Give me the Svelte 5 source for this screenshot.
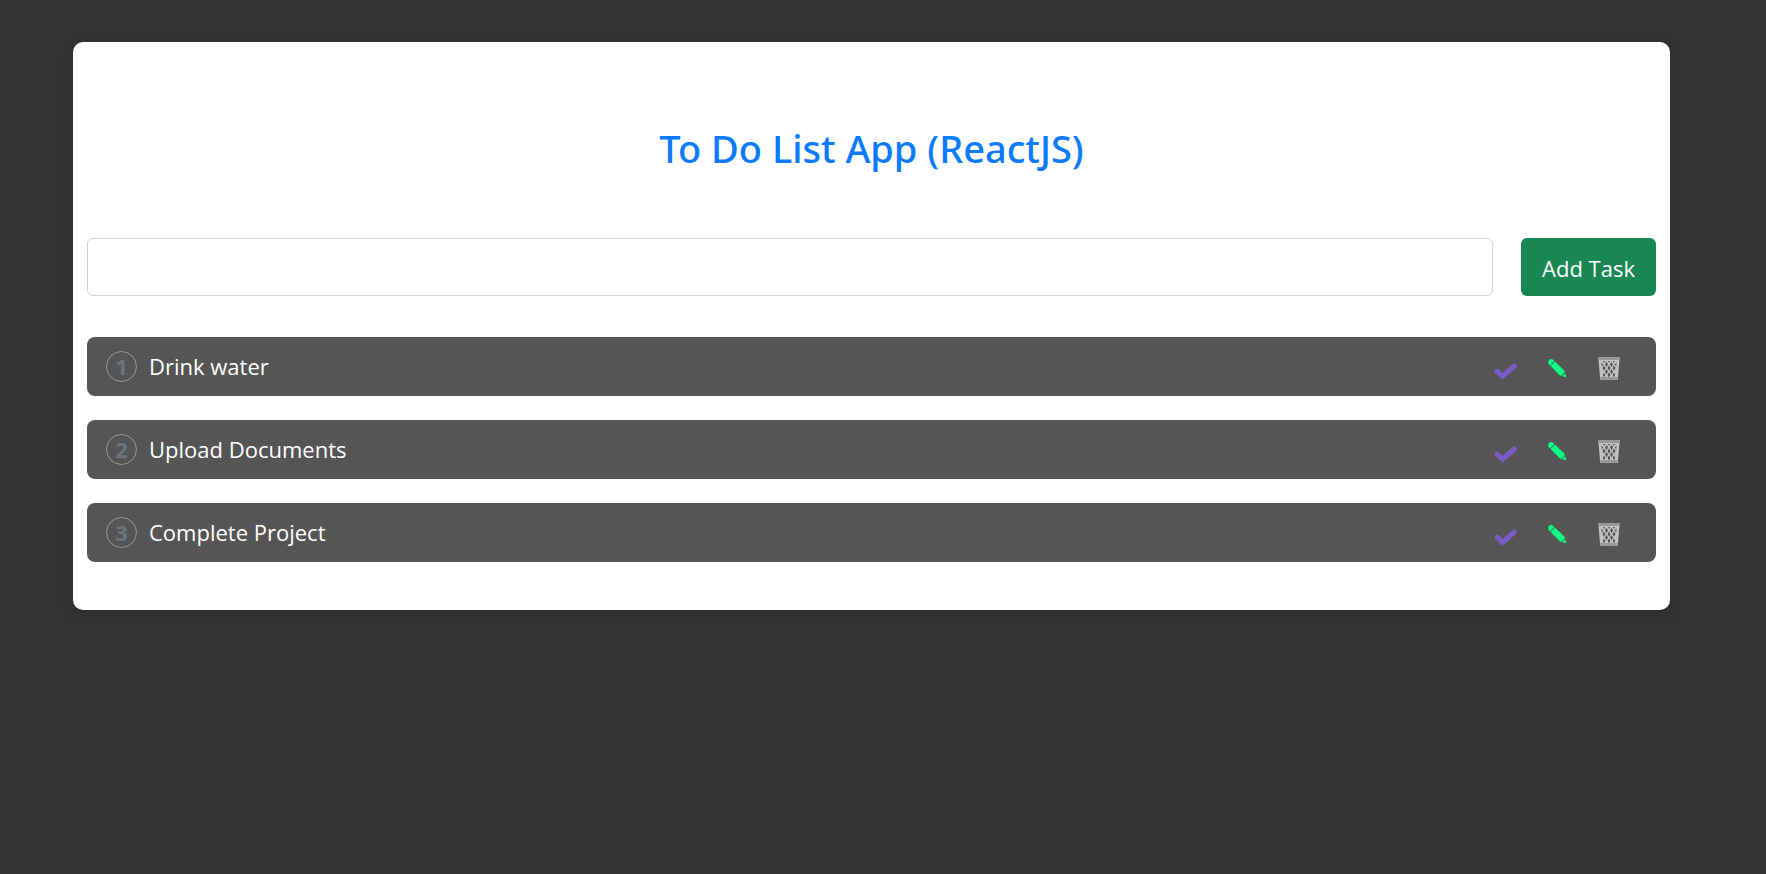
<script>
  let tasks = $state([
    { id: 1, title: 'Drink water' },
    { id: 2, title: 'Upload Documents' },
    { id: 3, title: 'Complete Project' }
  ]);
  let newTask = $state('');
  let nextId = 4;

  function addTask(event) {
    event.preventDefault();
    if (!newTask.trim()) return;
    tasks.push({ id: nextId++, title: newTask.trim() });
    newTask = '';
  }

  function toggle(task) {
    task.done = !task.done;
  }

  function edit(task) {
    newTask = task.title;
    remove(task);
  }

  function remove(task) {
    tasks = tasks.filter((t) => t.id !== task.id);
  }
</script>

<main class="card">
  <h1>To Do List App (ReactJS)</h1>

  <form class="entry" onsubmit={addTask}>
    <input type="text" aria-label="New task" bind:value={newTask} />
    <button class="add" type="submit">Add Task</button>
  </form>

  <ul class="tasks">
    {#each tasks as task, i (task.id)}
      <li class="task">
        <span class="number">{i + 1}</span>
        <span class="title" class:done={task.done}>{task.title}</span>
        <div class="actions">
          <button type="button" aria-label="Complete" onclick={() => toggle(task)}>
            <svg class="check" viewBox="0 0 28 28" aria-hidden="true">
              <path d="M6 17.2 L11.6 22.4 L23.4 12" />
            </svg>
          </button>
          <button type="button" aria-label="Edit" onclick={() => edit(task)}>
            <svg class="pencil" viewBox="0 0 28 28" aria-hidden="true">
              <path d="M5.3 7.4 Q4.8 10.2 7 11.4 L11.3 7 Q9.6 4.6 7.2 5.2 Q5.7 5.7 5.3 7.4Z" />
              <path d="M7.6 12 L12 7.6 L21.5 16.8 Q22.4 17.8 21.5 18.8 L19 21.4 Q18 22.3 17 21.4Z" />
              <path d="M19 22.3 L22.4 19.3 L23.2 23.3Z" />
            </svg>
          </button>
          <button type="button" aria-label="Delete" onclick={() => remove(task)}>
            <svg class="bin" viewBox="0 0 28 28" aria-hidden="true">
              <path class="body" d="M3.4 4 H24.6 L22.8 26 H5.2Z" />
              <g class="holes">
                <path d="M8 7h2l-1 2z M13 7h2l-1 2z M18 7h2l-1 2z" />
                <path d="M11.5 7.8l1.5 2.6-1.5 2.6-1.5-2.6z M16.5 7.8l1.5 2.6-1.5 2.6-1.5-2.6z M6.5 8.4l1.7 2.2-1.5 2.2z M21.5 8.4l-1.7 2.2 1.5 2.2z" />
                <path d="M9 11.4l1.5 2.7-1.5 2.7-1.5-2.7z M14 11.4l1.5 2.7-1.5 2.7-1.5-2.7z M19 11.4l1.5 2.7-1.5 2.7-1.5-2.7z" />
                <path d="M11.5 15l1.5 2.6-1.5 2.6-1.5-2.6z M16.5 15l1.5 2.6-1.5 2.6-1.5-2.6z" />
                <path d="M9 18.6l1.3 2.2-1 2h-.8l-.6-2z M14 18.6l1.4 2.2-.8 2h-1.2l-.8-2z M19 18.6l-1.3 2.2 1 2h.8l.6-2z" />
              </g>
              <path class="rim" d="M3.6 3 H24.4 Q25.2 3 25 4 L24.7 6 H3.3 L3 4 Q2.8 3 3.6 3Z" />
              <path class="base" d="M5.2 23 H22.8 L22.5 25.2 Q22.3 26 21.5 26 H6.5 Q5.7 26 5.5 25.2Z" />
            </svg>
          </button>
        </div>
      </li>
    {/each}
  </ul>
</main>

<style>
  :global(body) {
    background: #333;
  }

  .card,
  .card input,
  .card button {
    font-family: 'Segoe UI', 'Open Sans', 'Noto Sans', sans-serif;
  }

  .card {
    margin: 42px 96px 42px 73px;
    padding: 78px 14px 48px;
    border-radius: 10px;
    background: #fff;
    box-shadow: 0 4px 12px rgba(0, 0, 0, 0.12);
  }

  h1 {
    margin: 0 0 62px;
    color: #0a7aff;
    font-family: 'Segoe UI', 'Noto Sans', 'Open Sans', sans-serif;
    font-size: 38px;
    font-weight: 500;
    line-height: 56px;
    text-align: center;
  }

  .entry {
    display: flex;
    gap: 28px;
    margin-bottom: 41px;
  }

  input {
    flex: 1;
    min-width: 0;
    box-sizing: border-box;
    padding: 12px 18px;
    border: 1px solid #ced4da;
    border-radius: 6px;
    background: #fff;
    color: #212529;
    font-size: 22px;
  }

  .add {
    padding: 13px 21px 11px;
    border: 0;
    border-radius: 6px;
    background: #198754;
    color: #fff;
    font-size: 22px;
    line-height: 34px;
    white-space: nowrap;
  }

  .tasks {
    display: grid;
    gap: 24px;
    margin: 0;
    padding: 0;
    list-style: none;
  }

  .task {
    display: flex;
    align-items: center;
    padding: 12px 33px 12px 19px;
    border-radius: 8px;
    background: #555;
    color: #fff;
    font-size: 22px;
    line-height: 35px;
  }

  .number {
    box-sizing: border-box;
    width: 31px;
    height: 31px;
    margin-right: 12px;
    border: 1px solid #999;
    border-radius: 50%;
    color: #6c757d;
    font-weight: 700;
    line-height: 29px;
    text-align: center;
  }

  .title {
    flex: 1;
  }

  .done {
    text-decoration: line-through;
  }

  .actions {
    display: flex;
    gap: 24px;
    padding-top: 3px;
  }

  .actions button {
    display: flex;
    padding: 0;
    border: 0;
    background: none;
    cursor: pointer;
  }

  svg {
    width: 28px;
    height: 28px;
  }

  .check {
    fill: none;
    stroke: #7a5cc7;
    stroke-width: 5;
    stroke-linecap: round;
    stroke-linejoin: round;
  }

  .pencil {
    fill: #0cff82;
  }

  .body {
    fill: #c2c2c2;
  }

  .holes {
    fill: #555;
  }

  .rim,
  .base {
    fill: #999;
  }
</style>
